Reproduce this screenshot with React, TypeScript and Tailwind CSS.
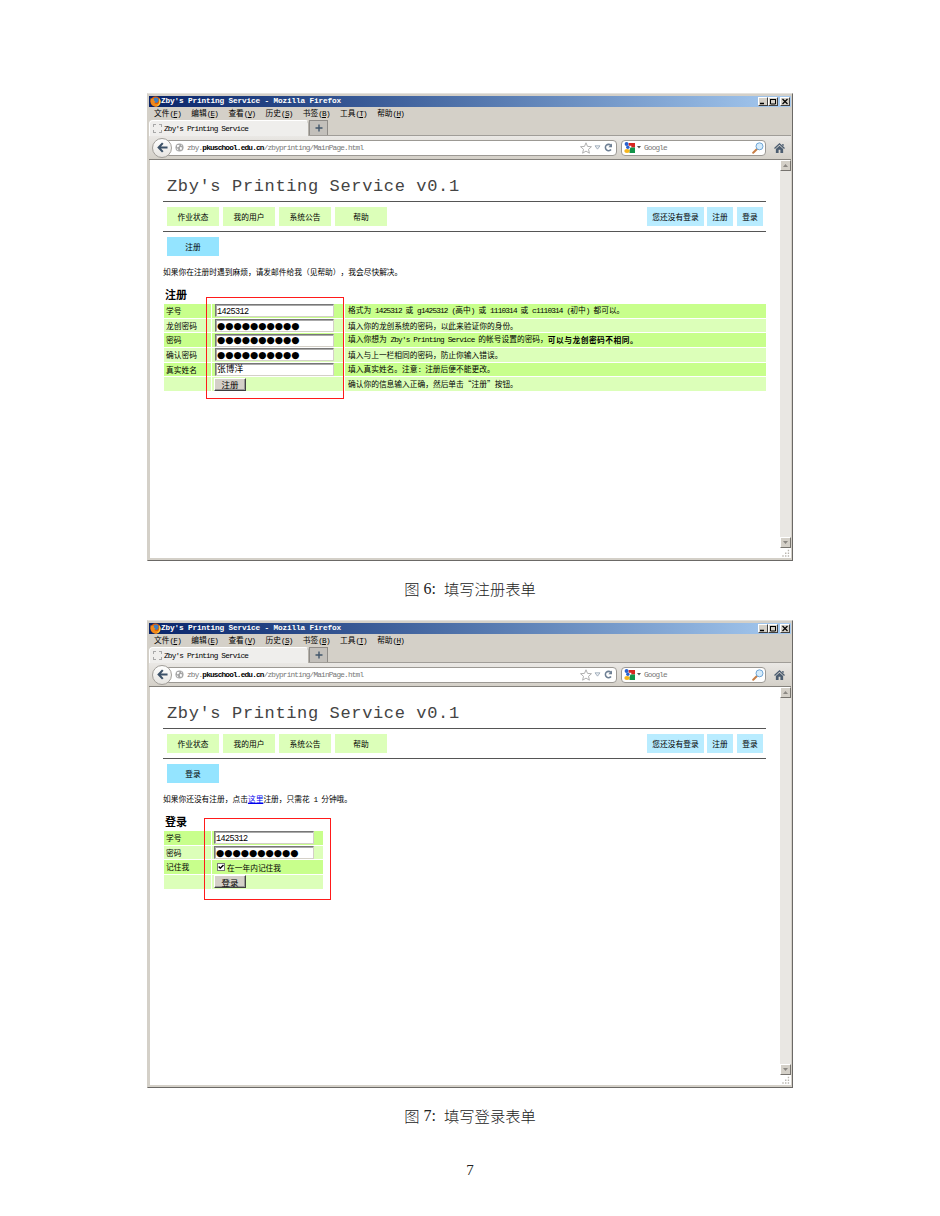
import React from "react";

type Kids = { children?: React.ReactNode };

/* Half-width characters take exactly half the width of a CJK glyph. */
function T({ children, className = "" }: { children: string; className?: string }) {
  const parts = children.split(/([\x20-\x7e]+)/);
  return (
    <span className={"whitespace-pre " + className}>
      {parts.map((p, i) =>
        i % 2 ? (
          <span key={i} className="font-['Liberation_Mono',monospace] tracking-[-0.105em]">
            {p}
          </span>
        ) : (
          p
        ),
      )}
    </span>
  );
}

const menus: [string, string][] = [
  ["文件", "F"],
  ["编辑", "E"],
  ["查看", "V"],
  ["历史", "S"],
  ["书签", "B"],
  ["工具", "T"],
  ["帮助", "H"],
];

function FirefoxIcon() {
  return (
    <svg viewBox="0 0 16 16" className="h-[11px] w-[11px]">
      <circle cx="8" cy="8" r="7.4" fill="#e66000" />
      <circle cx="8.500" cy="6" r="3.800" fill="#3b7fc4" />
      <path d="M1 3C0 9 2 15 8 15.5c5 0 7.500-4 7.300-8C14 11 11 12 8.500 11.500 6 11 6 9 8 8.500 6 7 5 6 6 4 4 4 2 4.500 1 3z" fill="#f08a1c" />
      <path d="M13 3c2 2 2.600 4 2.300 6-.6 3-3 5.500-6 6 3-2 5-5 3.700-12z" fill="#ffcb3d" />
    </svg>
  );
}

function WinButton({ children }: Kids) {
  return (
    <span className="flex h-[9px] w-[10px] items-center justify-center border border-t-white border-l-white border-r-[#404040] border-b-[#404040] bg-[#d4d0c8]">
      <svg viewBox="0 0 8 7" className="h-[7px] w-[8px]" fill="none" stroke="#000" strokeWidth="1">
        {children}
      </svg>
    </span>
  );
}

function TitleBar() {
  return (
    <div className="flex h-[11px] items-center bg-linear-to-r from-[#0a246a] to-[#a6caf0] pr-px pl-[1px]">
      <FirefoxIcon />
      <span className="grow whitespace-pre font-['Liberation_Mono',monospace] text-[7.75px] leading-none font-bold tracking-[-0.15px] text-white">
        Zby's Printing Service - Mozilla Firefox
      </span>
      <WinButton>
        <path d="M1 5.500h4" strokeWidth="1.500" />
      </WinButton>
      <WinButton>
        <path d="M1.500 1.500h5v4.500h-5zM1 1.500h6" />
      </WinButton>
      <span className="w-[2px]" />
      <WinButton>
        <path d="M1.500 1l5 5M6.500 1l-5 5" strokeWidth="1.200" />
      </WinButton>
    </div>
  );
}

function MenuBar() {
  return (
    <div className="flex h-[13px] items-center pl-[5px] leading-none">
      {menus.map(([name, key]) => (
        <span key={key} className="w-[37.200px] whitespace-pre">
          {name}
          <span className="font-['Liberation_Mono',monospace] tracking-[-0.1em]">
            (<u className="underline-offset-1">{key}</u>)
          </span>
        </span>
      ))}
    </div>
  );
}

function TabStrip() {
  return (
    <div className="flex h-[16px] items-end border-b border-[#a09d98] leading-none">
      <div className="-mb-px flex h-[16px] w-[160px] items-center rounded-t-sm border border-b-0 border-[#b5b1aa] border-l-white border-t-white bg-[#efeeec] pl-[3px]">
        <span className="h-[9px] w-[9px] border border-dashed border-[#a8a8a8]" />
        <T className="pl-[2px]">Zby's Printing Service</T>
      </div>
      <div className="flex h-[15px] w-[19px] items-center justify-center border border-b-0 border-[#8f8c88] bg-[#c3c0bb]">
        <svg viewBox="0 0 8 8" className="h-[8px] w-[8px]" stroke="#42566b" strokeWidth="1.400">
          <path d="M4 .5v7M.5 4h7" />
        </svg>
      </div>
    </div>
  );
}

function ToolBar() {
  return (
    <div className="flex h-[24px] items-center border-b border-[#85827d] bg-linear-to-b from-[#eae8e5] to-[#d4d0c8] pl-[3px] leading-none text-[#777]">
      <span className="z-10 flex h-[20px] w-[20px] shrink-0 items-center justify-center rounded-full border border-[#a19e99] bg-linear-to-b from-white to-[#e6e4e0]">
        <svg viewBox="0 0 12 12" className="h-[11px] w-[11px]" fill="none" stroke="#3c5168" strokeWidth="2.300">
          <path d="M6.300 1.200L1.800 6l4.500 4.800M2 6h9.500" />
        </svg>
      </span>
      <div className="-ml-[4px] flex h-[16px] w-[449px] shrink-0 items-center rounded-r-sm border border-[#9c9994] bg-white pl-[6px]">
        <svg viewBox="0 0 10 10" className="h-[9px] w-[9px]">
          <circle cx="5" cy="5" r="4.500" fill="#a5a5a5" />
          <path d="M2 2.500l3-.5-.5 2-2 1zM5.500 4.500l2.500.5-1 3-1.500-1zM6.500 1.500l1.500 1-.5 1zM1.500 6l2 .5v2z" fill="#fff" />
        </svg>
        <span className="grow pt-[2px] pl-[3px] font-['Liberation_Mono',monospace] tracking-[-0.80px] whitespace-pre">
          zby.<b className="text-black">pkuschool.edu.cn</b>/zbyprinting/MainPage.html
        </span>
        <svg viewBox="0 0 12 12" className="-mr-[1px] h-[12px] w-[12px]" fill="#fff" stroke="#b0b0b0" strokeWidth="1">
          <path d="M6 .8l1.500 3.600 4 .3-3 2.600.9 3.900L6 9.100l-3.400 2.100.9-3.900-3-2.600 4-.3z" />
        </svg>
        <svg viewBox="0 0 8 6" className="ml-[3px] h-[5px] w-[7px]" fill="#eef1f4" stroke="#98a5b4" strokeWidth="1">
          <path d="M1 1h6L4 5z" />
        </svg>
        <svg viewBox="0 0 10 10" className="mr-[3px] ml-[3px] h-[9px] w-[9px]" fill="none" stroke="#6d7f94" strokeWidth="1.700">
          <path d="M7.800 7.200A3.500 3.500 0 1 1 7.600 2.600" />
          <path d="M8.900.5v4.200H4.800z" fill="#6d7f94" stroke="none" />
        </svg>
      </div>
      <div className="ml-[4px] flex h-[16px] w-[145px] shrink-0 items-center rounded-sm border border-[#9c9994] bg-white pl-[2px]">
        <svg viewBox="0 0 12 12" className="h-[11px] w-[11px]">
          <path d="M5 1h7v5H8V4H5z" fill="#d8251f" />
          <path d="M7 6h5v6H6V9z" fill="#12944a" />
          <circle cx="2.800" cy="2.200" r="2.100" fill="#2a62cf" />
          <circle cx="4.200" cy="5.600" r="1.900" fill="#2a62cf" />
          <ellipse cx="3.300" cy="9.800" rx="3" ry="2.100" fill="#f6b51e" />
        </svg>
        <svg viewBox="0 0 4 3" className="ml-[2px] h-[3px] w-[4px]">
          <path d="M0 0h4L2 2.500z" fill="#555" />
        </svg>
        <T className="grow pl-[3px]">Google</T>
        <svg viewBox="0 0 12 12" className="mr-[1px] h-[12px] w-[12px]">
          <path d="M1.200 10.800L5 7" stroke="#c87f46" strokeWidth="2" strokeLinecap="round" />
          <circle cx="7.500" cy="4.300" r="3.500" fill="#d6ecfb" stroke="#6fa5d6" />
        </svg>
      </div>
      <svg viewBox="0 0 12 11" className="ml-[8px] h-[10px] w-[11px]" fill="#4c5d70">
        <path d="M6 0l6 5.500-1 1L6 2 1 6.500l-1-1zM9 1h1.500v2.500L9 2.500zM6 3l4 3.600V11H7V7.500H5V11H2V6.600z" />
      </svg>
    </div>
  );
}

function ScrollButton({ down }: { down?: boolean }) {
  return (
    <span className="flex h-[11px] w-[11px] items-center justify-center border border-t-white border-l-white border-r-[#77746f] border-b-[#77746f] bg-[#d4d0c8]">
      <svg viewBox="0 0 5 3" className="h-[3px] w-[5px]" fill="#8b8883">
        <path d={down ? "M0 0h5L2.500 3z" : "M0 3h5L2.500 0z"} />
      </svg>
    </span>
  );
}

function ScrollBar() {
  return (
    <div className="flex w-[11px] shrink-0 flex-col bg-[#e9e7e3]">
      <ScrollButton />
      <span className="grow" />
      <ScrollButton down />
      <svg viewBox="0 0 11 11" className="h-[10px] w-[11px] bg-white" fill="#b8b4ad">
        <path d="M8 2h1.500v1.500H8zM8 5h1.500v1.500H8zM8 8h1.500v1.500H8zM5 5h1.500v1.500H5zM5 8h1.500v1.500H5zM2 8h1.500v1.500H2z" />
      </svg>
    </div>
  );
}

function SiteHeader() {
  return (
    <>
      <h1 className="flex h-[41px] items-center pt-[11px] pl-[4px] font-['Liberation_Mono',monospace] text-[17px] leading-none tracking-[0.640px] whitespace-pre text-[#444]">
        Zby's Printing Service v0.1
      </h1>
      <div className="flex h-[31px] items-center gap-[4px] border-t border-b border-[#555] pr-[3px] pl-[4px] leading-none">
        {["作业状态", "我的用户", "系统公告", "帮助"].map((s) => (
          <span key={s} className="flex h-[19px] w-[52px] items-center justify-center bg-[#dcffb9]">
            {s}
          </span>
        ))}
        <span className="grow" />
        <span className="flex h-[19px] w-[57px] items-center justify-center bg-[#b9ecff]">您还没有登录</span>
        <span className="-ml-px flex h-[19px] w-[26px] items-center justify-center bg-[#b9ecff]">注册</span>
        <span className="flex h-[19px] w-[26px] items-center justify-center bg-[#b9ecff]">登录</span>
      </div>
    </>
  );
}

function Field({ children, width }: Kids & { width: string }) {
  return (
    <span
      className={
        "flex h-[13px] items-center overflow-hidden border border-t-[#777] border-l-[#777] border-r-[#d4d0c8] border-b-[#d4d0c8] bg-white pl-px leading-none shadow-[inset_1px_1px_0_#aaa] " +
        width
      }
    >
      {children}
    </span>
  );
}

function Dots() {
  return (
    <span className="font-['DejaVu_Sans',sans-serif] text-[9.500px] tracking-[-0.050px] whitespace-nowrap">
      ●●●●●●●●●●
    </span>
  );
}

function Num() {
  return <span className="pt-[2px] font-['Liberation_Mono',monospace] text-[8.500px] tracking-[-0.600px]">1425312</span>;
}

function Push({ children }: Kids) {
  return (
    <span className="-ml-px flex h-[13px] w-[32px] items-center justify-center border border-t-white border-l-white border-r-[#404040] border-b-[#404040] bg-[#d4d0c8] text-[8.500px] leading-none shadow-[inset_-1px_-1px_0_#999]">
      {children}
    </span>
  );
}

function Row({ label, odd, cols, children, note }: Kids & { label: string; odd?: boolean; cols: string; note?: React.ReactNode }) {
  const bg = odd ? "bg-[#c8ff8c] " : "bg-[#dcffb9] ";
  return (
    <div className={"grid h-[13.500px] gap-[1px] leading-none " + cols}>
      <span className={bg + "flex items-center pl-[2px]"}>{label}</span>
      <span className={bg + "flex items-center pl-[3px]"}>{children}</span>
      {note && <span className={bg + "flex items-center pl-[3px]"}>{note}</span>}
    </div>
  );
}

function RegisterPage() {
  const cols = "grid-cols-[47px_132px_421px]";
  const fw = "w-[119px]";
  return (
    <>
      <div className="mt-[5px] ml-[4px] flex h-[19px] w-[52px] items-center justify-center bg-[#94e4ff] leading-none">注册</div>
      <p className="mt-[11px] h-[10px] leading-[10px]">
        <T>如果你在注册时遇到麻烦，请发邮件给我（见帮助），我会尽快解决。</T>
      </p>
      <h2 className="mt-[11px] h-[12px] pl-[2px] text-[11px] leading-[12px] font-bold">注册</h2>
      <div className="relative mt-[4px] ml-px flex flex-col gap-[1.200px]">
        <Row label="学号" odd cols={cols} note={<T>格式为 1425312 或 g1425312 (高中) 或 1110314 或 c1110314 (初中) 都可以。</T>}>
          <Field width={fw}><Num /></Field>
        </Row>
        <Row label="龙创密码" cols={cols} note={<T>填入你的龙创系统的密码，以此来验证你的身份。</T>}>
          <Field width={fw}><Dots /></Field>
        </Row>
        <Row
          label="密码"
          odd
          cols={cols}
          note={
            <>
              <T>填入你想为 Zby's Printing Service 的帐号设置的密码，</T>
              <b className="tracking-[0.500px]">可以与龙创密码不相同。</b>
            </>
          }
        >
          <Field width={fw}><Dots /></Field>
        </Row>
        <Row label="确认密码" cols={cols} note={<T>填入与上一栏相同的密码，防止你输入错误。</T>}>
          <Field width={fw}><Dots /></Field>
        </Row>
        <Row label="真实姓名" odd cols={cols} note={<T>填入真实姓名。注意: 注册后便不能更改。</T>}>
          <Field width={fw}><span className="text-[8.700px]">张博洋</span></Field>
        </Row>
        <Row label="" cols={cols} note={<T>确认你的信息输入正确，然后单击“注册”按钮。</T>}>
          <Push>注册</Push>
        </Row>
        <div className="absolute -top-[7px] left-[42px] h-[102px] w-[138px] border border-[#ff1a1a]" />
      </div>
    </>
  );
}

function LoginPage() {
  const cols = "grid-cols-[47px_111px]";
  const fw = "-ml-px w-[100px]";
  return (
    <>
      <div className="mt-[5px] ml-[4px] flex h-[19px] w-[52px] items-center justify-center bg-[#94e4ff] leading-none">登录</div>
      <p className="mt-[11px] h-[10px] leading-[10px]">
        <T>如果你还没有注册，点击</T>
        <a className="text-[#0000ee] underline underline-offset-1">这里</a>
        <T>注册，只需花 1 分钟哦。</T>
      </p>
      <h2 className="mt-[11px] h-[12px] pl-[2px] text-[11px] leading-[12px] font-bold">登录</h2>
      <div className="relative mt-[4px] ml-px flex flex-col gap-[1.200px]">
        <Row label="学号" odd cols={cols}>
          <Field width={fw}><Num /></Field>
        </Row>
        <Row label="密码" cols={cols}>
          <Field width={fw}><Dots /></Field>
        </Row>
        <Row label="记住我" odd cols={cols}>
          <span className="mr-[2px] ml-[2px] flex h-[8px] w-[8px] items-center justify-center border border-[#777] bg-white">
            <svg viewBox="0 0 6 6" className="h-[6px] w-[6px]" fill="none" stroke="#000" strokeWidth="1.400">
              <path d="M.7 2.500L2.300 4.300 5.500 1" />
            </svg>
          </span>
          <span className="pt-px">在一年内记住我</span>
        </Row>
        <Row label="" cols={cols}>
          <Push>登录</Push>
        </Row>
        <div className="absolute -top-[13px] left-[40px] h-[82px] w-[127px] border border-[#ff1a1a]" />
      </div>
    </>
  );
}

function BrowserWindow({ children }: Kids) {
  return (
    <section className="ml-[147px] flex h-[468px] w-[646px] flex-col border border-t-[#e4e2de] border-l-[#d4d0c8] border-r-[#6b6966] border-b-[#6b6966] bg-[#d4d0c8] p-px pt-[2px] text-[7.730px] text-black">
      <TitleBar />
      <MenuBar />
      <TabStrip />
      <ToolBar />
      <div className="flex grow border-b border-l border-[#d4d0c8] bg-white">
        <div className="w-[630px] shrink-0 pr-[14px] pl-[13px]">
          <SiteHeader />
          {children}
        </div>
        <ScrollBar />
      </div>
    </section>
  );
}

function Caption({ n, children }: { n: number; children: string }) {
  return (
    <p className="mt-[18px] flex h-[20px] items-center justify-center text-[15.300px] leading-none font-light whitespace-pre text-[#222]">
      图<span className="font-['Liberation_Serif',serif] text-[16px]">{" " + n + ":  "}</span>
      {children}
    </p>
  );
}

export default function App() {
  return (
    <main
      lang="zh-CN"
      className="h-[1216px] w-[940px] overflow-hidden bg-white pt-[93px] font-['Noto_Sans_CJK_SC','Liberation_Mono',sans-serif] [text-spacing-trim:space-all]"
    >
      <BrowserWindow>
        <RegisterPage />
      </BrowserWindow>
      <Caption n={6}>填写注册表单</Caption>
      <div className="h-[21px]" />
      <BrowserWindow>
        <LoginPage />
      </BrowserWindow>
      <Caption n={7}>填写登录表单</Caption>
      <footer className="mt-[36px] text-center font-['Liberation_Serif',serif] text-[15px] leading-[16px] text-[#222]">7</footer>
    </main>
  );
}
